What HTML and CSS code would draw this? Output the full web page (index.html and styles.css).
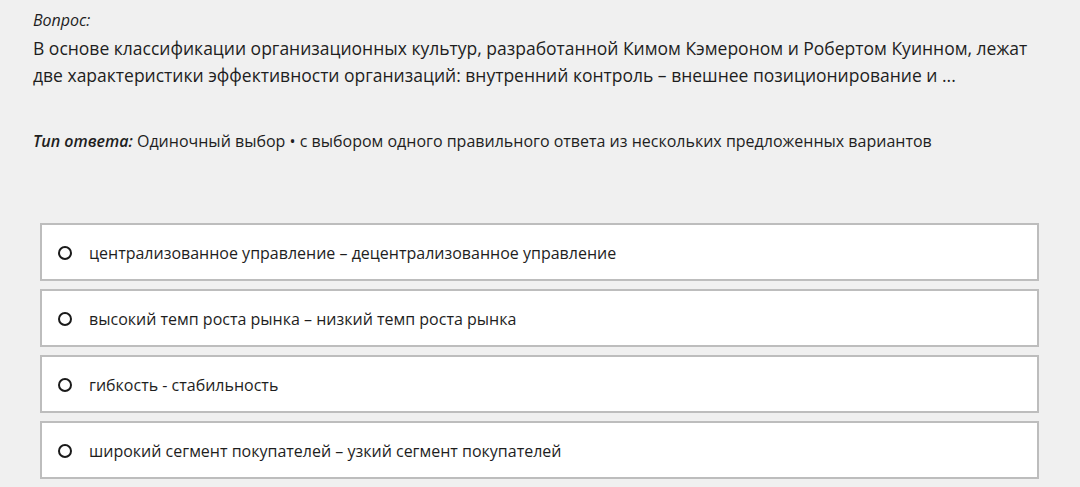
FILE: index.html
```html
<!DOCTYPE html>
<html lang="ru">
<head>
<meta charset="UTF-8">
<title>Вопрос</title>
<link rel="stylesheet" href="styles.css">
</head>
<body>

<div class="question">
  <div class="label">Вопрос:</div>
  <p class="question-text">В основе классификации организационных культур, разработанной Кимом Кэмероном и Робертом Куинном, лежат две характеристики эффективности организаций: внутренний контроль – внешнее позиционирование и ...</p>
  <p class="answer-type"><em>Тип ответа:</em> Одиночный выбор • с выбором одного правильного ответа из нескольких предложенных вариантов</p>
</div>

<!-- Answer options -->
<div class="options">
  <label class="option"><span class="radio"></span>централизованное управление – децентрализованное управление</label>
  <label class="option"><span class="radio"></span>высокий темп роста рынка – низкий темп роста рынка</label>
  <label class="option"><span class="radio"></span>гибкость - стабильность</label>
  <label class="option"><span class="radio"></span>широкий сегмент покупателей – узкий сегмент покупателей</label>
</div>

</body>
</html>
```

FILE: styles.css
```css
  /* Body styling */
  body {
    margin: 0;
    padding: 10px 33px 0 33px;
    background-color: #f0f0f0;
    font-family: 'Open Sans', 'Noto Sans', sans-serif;
    color: #1e1e1e;
  }

  .label {
    font-style: italic;
    font-size: 16px;
    line-height: 20px;
  }

  .question-text {
    margin: 5px 0 0 0;
    font-size: 17.5px;
    line-height: 27px;
    width: 1010px;
  }

  .answer-type {
    margin: 41px 0 0 0;
    font-size: 16px;
    line-height: 22px;
  }

  .answer-type em {
    font-weight: 600;
  }

  /* Options list */
  .options {
    display: flex;
    flex-direction: column;
    gap: 8px;
    margin: 71px 0 0 7px;
    width: 999px;
  }

  .option {
    display: flex;
    align-items: center;
    height: 52px;
    padding: 2px 16px 0 16px;
    background-color: #fff;
    border: 2px solid #bdbdbd;
    font-size: 16px;
    color: #1e1e1e;
    cursor: pointer;
  }

  .radio {
    width: 10px;
    height: 10px;
    border: 2px solid #1a1a1a;
    border-radius: 50%;
    margin-right: 17px;
    flex-shrink: 0;
  }
```
